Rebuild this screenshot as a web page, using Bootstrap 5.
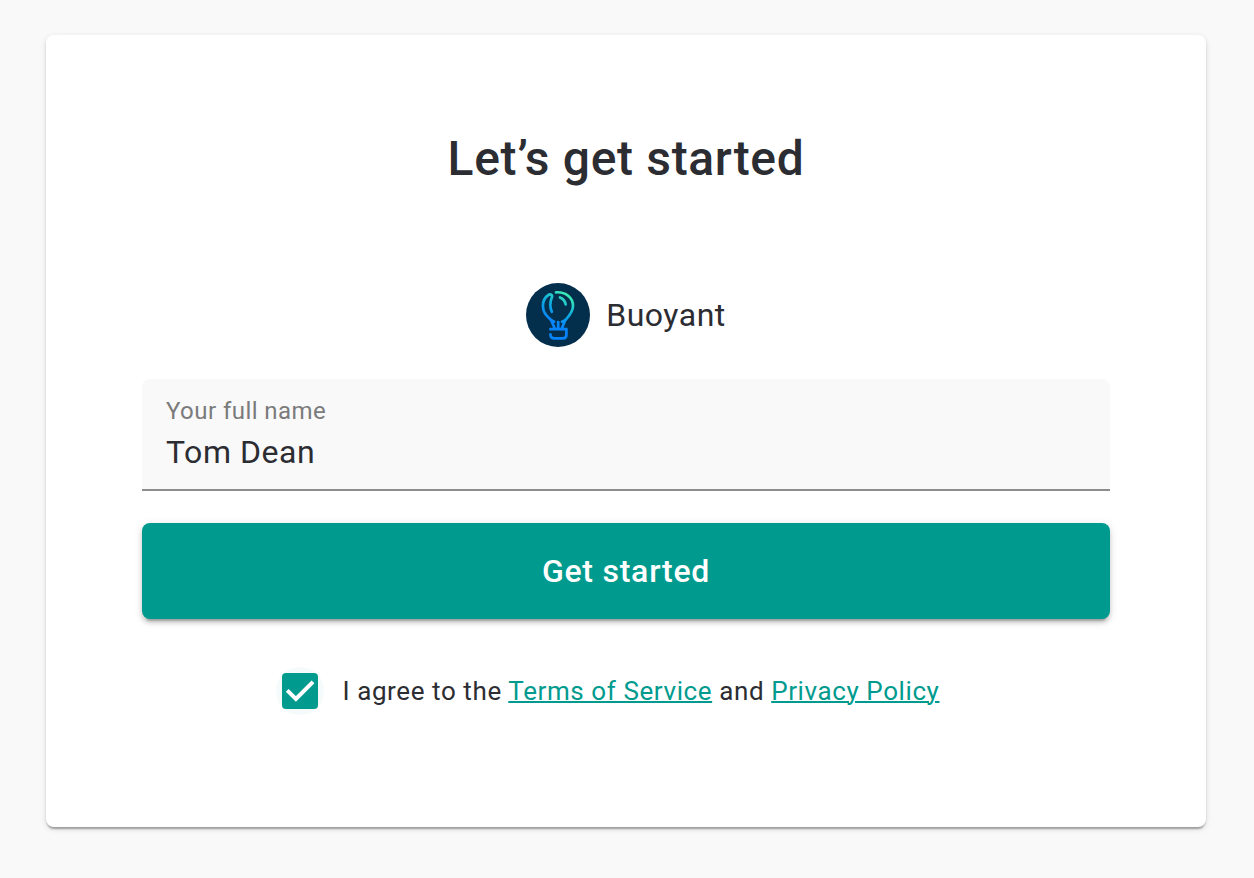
<!DOCTYPE html>
<html lang="en">
<head>
<meta charset="utf-8">
<meta name="viewport" content="width=device-width, initial-scale=1">
<title>Let’s get started</title>
<link href="https://cdn.jsdelivr.net/npm/bootstrap@5.3.0/dist/css/bootstrap.min.css" rel="stylesheet">
<style>
  body { background: #f9f9f9; color: #2c2d32; font-family: Roboto, sans-serif; padding: 35px 48px 0 46px; min-height: 100vh; }
  .signup { height: 792px; border-radius: 8px; padding: 92px 96px 0; color: inherit;
    box-shadow: 0 4px 2px -2px rgba(0,0,0,.2), 0 2px 2px rgba(0,0,0,.14), 0 2px 6px rgba(0,0,0,.12); }
  .signup h1 { font-size: 48px; font-weight: 500; line-height: 64px; letter-spacing: .67px; margin-bottom: 92px; }
  .org { height: 64px; font-size: 32px; letter-spacing: .5px; margin-bottom: 32px; }
  .field { height: 112px; background: #f9f9f9; border-bottom: 2px solid #8c8c8e; border-radius: 8px 8px 0 0; padding: 16px 24px 0; margin-bottom: 32px; }
  .field label { font-size: 24px; line-height: 32px; letter-spacing: .45px; color: #7b7b7c; }
  .field input { font-size: 32px; line-height: 50px; height: 50px; letter-spacing: .55px; color: inherit; }
  .btn-start { height: 96px; border-radius: 8px; background: #009b8e; color: #fff; font-size: 32px; font-weight: 500; letter-spacing: .76px;
    box-shadow: 0 6px 2px -4px rgba(0,0,0,.2), 0 4px 4px rgba(0,0,0,.14), 0 2px 10px rgba(0,0,0,.12); }
  .btn-start:hover { background: #009b8e; color: #fff; }
  .agree { margin: 48px 0 0 134px; font-size: 26px; letter-spacing: .59px; }
  .agree a { color: #009b8e; text-decoration-thickness: 2px; }
  .halo { width: 48px; height: 48px; background: #f5fbfb; margin-right: 18.5px; }
</style>
</head>
<body>
<main class="signup card border-0">
  <h1 class="text-center">Let’s get started</h1>
  <div class="org d-flex justify-content-center align-items-center gap-3">
    <svg width="64" height="64" viewBox="0 0 64 64" fill="none" aria-hidden="true">
      <defs>
        <linearGradient id="sky" gradientUnits="userSpaceOnUse" x1="42" y1="12" x2="26" y2="38">
          <stop offset="0" stop-color="#3ceab4"/><stop offset=".5" stop-color="#10aedd"/><stop offset="1" stop-color="#0884fa"/>
        </linearGradient>
      </defs>
      <circle cx="32" cy="32" r="32" fill="#032f4c"/>
      <g stroke="url(#sky)" stroke-width="2.7" stroke-linecap="round" stroke-linejoin="round">
        <path d="M25.8 28.8C23.9 24.5 23.8 19.5 25.8 14.5C26.8 12 24.6 10.6 22.4 12C18.7 14.4 16.9 19 16.9 23C16.9 30 21.2 33.2 25.2 37.2L28.2 38.7"/>
        <path d="M30 9.3C39.5 8.7 47 14.5 47 22.8C47 29.5 42.8 33.2 39.2 37.2L36 38.7"/>
        <path d="M34 14.5C37 15.7 39 18.2 39.7 21.5"/>
        <path d="M25.2 37.2L29 46M39.2 37.2L35.6 46M32.2 39.2V46M24.4 46.2H40.4V51.7Q40.4 55.4 36.8 55.4H28.2Q24.6 55.4 24.4 51.4"/>
      </g>
    </svg>
    <span>Buoyant</span>
  </div>
  <div class="field">
    <label for="name" class="d-block">Your full name</label>
    <input id="name" type="text" value="Tom Dean" class="form-control border-0 bg-transparent p-0 shadow-none">
  </div>
  <button type="button" class="btn btn-start border-0 w-100">Get started</button>
  <div class="agree d-flex align-items-center">
    <span class="halo rounded-circle d-flex align-items-center justify-content-center flex-shrink-0">
      <svg width="36" height="36" viewBox="0 0 36 36" role="img" aria-label="Checked">
        <rect width="36" height="36" rx="4" fill="#009b8e"/>
        <path d="M5.2 17.4L13.9 25.9L31 8.8" fill="none" stroke="#fff" stroke-width="4"/>
      </svg>
    </span>
    <span class="text-nowrap">I agree to the <a href="#">Terms of Service</a> and <a href="#">Privacy Policy</a></span>
  </div>
</main>
<script src="https://cdn.jsdelivr.net/npm/bootstrap@5.3.0/dist/js/bootstrap.bundle.min.js"></script>
</body>
</html>
